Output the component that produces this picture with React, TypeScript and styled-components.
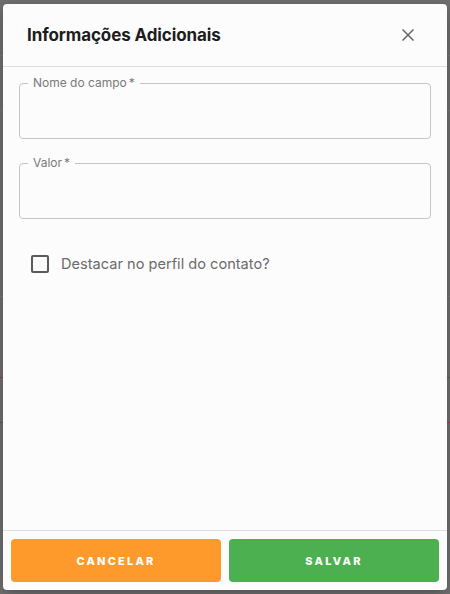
import React, { useState } from "react";
import styled, { createGlobalStyle } from "styled-components";

const GlobalStyle = createGlobalStyle`
  * { box-sizing: border-box; }
  html, body { margin: 0; padding: 0; height: 100%; }
  body {
    font-family: Inter, "Liberation Sans", Arial, sans-serif;
    background: #717171;
  }
  #root { height: 100%; }
`;

export default function App() {
  const [highlight, setHighlight] = useState(false);

  return (
    <>
      <GlobalStyle />
      <S.Backdrop>
        <S.Dialog>
          <S.Header>
            <S.Title>Informações Adicionais</S.Title>
            <S.CloseButton aria-label="Fechar">
              <svg width="12" height="12" viewBox="0 0 12 12">
                <path d="M0.5 0.5 L11.5 11.5 M11.5 0.5 L0.5 11.5" stroke="#666" strokeWidth="1.5" fill="none" />
              </svg>
            </S.CloseButton>
          </S.Header>
          <S.Body>
            <S.Field>
              <S.Legend>
                Nome do campo<S.Star>*</S.Star>
              </S.Legend>
              <S.Input />
            </S.Field>
            <S.Field>
              <S.Legend>
                Valor<S.Star>*</S.Star>
              </S.Legend>
              <S.Input />
            </S.Field>
            <S.CheckRow onClick={() => setHighlight(!highlight)}>
              <S.Box $checked={highlight} />
              <S.CheckLabel>Destacar no perfil do contato?</S.CheckLabel>
            </S.CheckRow>
          </S.Body>
          <S.Footer>
            <S.Action $color="#fe992c">CANCELAR</S.Action>
            <S.Action $color="#4caf50">SALVAR</S.Action>
          </S.Footer>
        </S.Dialog>
      </S.Backdrop>
    </>
  );
}

const S = {
  Backdrop: styled.div`
    height: 100%;
    padding: 4px 3px 4px 3px;
    display: flex;
    background:
      linear-gradient(#7a7a7a, #7a7a7a) 0 55px / 100% 1px no-repeat,
      linear-gradient(#7a7a7a, #7a7a7a) 0 110px / 100% 1px no-repeat,
      linear-gradient(#7a7a7a, #7a7a7a) 0 296px / 100% 1px no-repeat,
      linear-gradient(#8a4a4a, #8a4a4a) 0 377px / 100% 1px no-repeat,
      linear-gradient(#8a4a4a, #8a4a4a) 0 422px / 100% 1px no-repeat,
      #717171;
  `,
  Dialog: styled.div`
    flex: 1;
    display: flex;
    flex-direction: column;
    background: #fcfcfc;
    border-radius: 4px;
    box-shadow: 0 4px 16px rgba(0, 0, 0, 0.3);
    overflow: hidden;
  `,
  Header: styled.div`
    height: 63px;
    flex-shrink: 0;
    display: flex;
    align-items: center;
    justify-content: space-between;
    padding: 0 33px 0 24px;
    border-bottom: 1px solid #dedede;
  `,
  Title: styled.h2`
    margin: 0;
    font-size: 17px;
    font-weight: 700;
    color: #1d1d1d;
    letter-spacing: -0.1px;
  `,
  CloseButton: styled.button`
    border: none;
    background: none;
    padding: 0;
    width: 12px;
    height: 12px;
    display: flex;
    cursor: pointer;
  `,
  Body: styled.div`
    flex: 1;
    padding: 9px 16px 0 16px;
    display: flex;
    flex-direction: column;
    gap: 17px;
  `,
  Field: styled.fieldset`
    margin: 0;
    height: 63px;
    padding: 0 12px;
    border: 1px solid #c4c4c4;
    border-radius: 4px;
    min-width: 0;
  `,
  Legend: styled.legend`
    padding: 0 5px 0 5px;
    margin-left: -4px;
    font-size: 12px;
    line-height: 14px;
    color: #7a7a7a;
  `,
  Star: styled.span`
    margin-left: 2px;
  `,
  Input: styled.input`
    border: none;
    outline: none;
    background: transparent;
    width: 100%;
    height: 42px;
    font: inherit;
    font-size: 15px;
  `,
  CheckRow: styled.label`
    display: flex;
    align-items: center;
    gap: 12px;
    padding: 19px 0 0 12px;
    cursor: pointer;
  `,
  Box: styled.span<{ $checked: boolean }>`
    width: 18px;
    height: 18px;
    border: 2px solid #5a5a5a;
    border-radius: 2px;
    background: ${(p) => (p.$checked ? "#5a5a5a" : "transparent")};
  `,
  CheckLabel: styled.span`
    font-size: 14.6px;
    line-height: 18px;
    color: #6b6b6b;
  `,
  Footer: styled.div`
    flex-shrink: 0;
    display: flex;
    gap: 8px;
    padding: 8px 8px 8px 8px;
    border-top: 1px solid #dedede;
  `,
  Action: styled.button<{ $color: string }>`
    flex: 1;
    height: 43px;
    border: none;
    border-radius: 4px;
    background: ${(p) => p.$color};
    color: #fff;
    font-family: Inter, "Liberation Sans", Arial, sans-serif;
    font-size: 11px;
    font-weight: 800;
    letter-spacing: 2.2px;
    padding: 0;
    cursor: pointer;
  `,
};
